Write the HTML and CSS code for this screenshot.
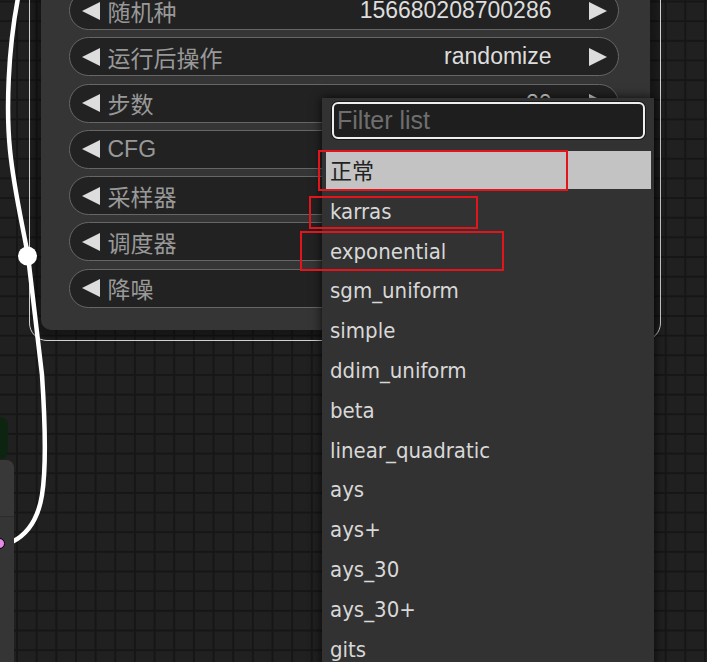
FILE: index.html
```html
<!doctype html>
<html lang="zh">
  <head>
    <meta charset="UTF-8" />
    <meta name="viewport" content="width=device-width, initial-scale=1.0" />
    <title>KSampler - scheduler</title>
    <link rel="stylesheet" href="styles.css">
  </head>
  <body>
    <div class="canvas">
      <!-- selected sampler node -->
      <div class="node node-sampler">
        <div class="widget">
          <svg class="arrow" viewBox="0 0 18 18"><polygon points="18,0 0,9 18,18" /></svg>
          <span class="label">随机种</span>
          <span class="value">156680208700286</span>
          <svg class="arrow" viewBox="0 0 18 18"><polygon points="0,0 18,9 0,18" /></svg>
        </div>
        <div class="widget">
          <svg class="arrow" viewBox="0 0 18 18"><polygon points="18,0 0,9 18,18" /></svg>
          <span class="label">运行后操作</span>
          <span class="value">randomize</span>
          <svg class="arrow" viewBox="0 0 18 18"><polygon points="0,0 18,9 0,18" /></svg>
        </div>
        <div class="widget">
          <svg class="arrow" viewBox="0 0 18 18"><polygon points="18,0 0,9 18,18" /></svg>
          <span class="label">步数</span>
          <span class="value">20</span>
          <svg class="arrow" viewBox="0 0 18 18"><polygon points="0,0 18,9 0,18" /></svg>
        </div>
        <div class="widget">
          <svg class="arrow" viewBox="0 0 18 18"><polygon points="18,0 0,9 18,18" /></svg>
          <span class="label">CFG</span>
          <span class="value">8.0</span>
          <svg class="arrow" viewBox="0 0 18 18"><polygon points="0,0 18,9 0,18" /></svg>
        </div>
        <div class="widget">
          <svg class="arrow" viewBox="0 0 18 18"><polygon points="18,0 0,9 18,18" /></svg>
          <span class="label">采样器</span>
          <span class="value">euler</span>
          <svg class="arrow" viewBox="0 0 18 18"><polygon points="0,0 18,9 0,18" /></svg>
        </div>
        <div class="widget">
          <svg class="arrow" viewBox="0 0 18 18"><polygon points="18,0 0,9 18,18" /></svg>
          <span class="label">调度器</span>
          <span class="value">正常</span>
          <svg class="arrow" viewBox="0 0 18 18"><polygon points="0,0 18,9 0,18" /></svg>
        </div>
        <div class="widget">
          <svg class="arrow" viewBox="0 0 18 18"><polygon points="18,0 0,9 18,18" /></svg>
          <span class="label">降噪</span>
          <span class="value">1.00</span>
          <svg class="arrow" viewBox="0 0 18 18"><polygon points="0,0 18,9 0,18" /></svg>
        </div>
      </div>

      <!-- link wire -->
      <svg class="wires" viewBox="0 0 707 662">
        <path d="M18,-2 C8,50 6,110 10,150 S22,222 28,256 L42,375 C45,420 46,470 42,495 C38,520 26,535 12,542" />
        <circle cx="27.5" cy="256" r="9.5" />
      </svg>

      <!-- node at the left edge -->
      <div class="group-tag"></div>
      <div class="node node-left">
        <div class="node-left-title"></div>
        <div class="slot"></div>
      </div>

      <!-- scheduler dropdown -->
      <div class="menu">
        <input class="filter" type="text" placeholder="Filter list" />
        <div class="entry selected">正常</div>
        <div class="entry">karras</div>
        <div class="entry">exponential</div>
        <div class="entry">sgm_uniform</div>
        <div class="entry">simple</div>
        <div class="entry">ddim_uniform</div>
        <div class="entry">beta</div>
        <div class="entry">linear_quadratic</div>
        <div class="entry">ays</div>
        <div class="entry">ays+</div>
        <div class="entry">ays_30</div>
        <div class="entry">ays_30+</div>
        <div class="entry">gits</div>
      </div>

      <!-- red annotation boxes -->
      <div class="mark mark-1"></div>
      <div class="mark mark-2"></div>
      <div class="mark mark-3"></div>
    </div>
  </body>
</html>
```

FILE: styles.css
```css
body {
  margin: 0;
  background: #202020;
}

.canvas {
  position: relative;
  width: 707px;
  height: 662px;
  overflow: hidden;
  background-color: #202020;
  background-image:
    linear-gradient(to right, #161616 2px, transparent 2px),
    linear-gradient(to bottom, #161616 2px, transparent 2px);
  background-size: 19.66px 19.66px;
  background-position: 16px 0, 0 0.5px;
  font-family: 'Liberation Sans', 'Noto Sans CJK SC', sans-serif;
}

.node {
  position: absolute;
  box-sizing: border-box;
  background: #353535;
}

.node-sampler {
  left: 41px;
  top: -40px;
  width: 609px;
  height: 370px;
  padding: 31px 31px 0 28px;
  border-radius: 10px;
  display: flex;
  flex-direction: column;
  gap: 7.3px;
  box-shadow: 0 0 6px 8px rgba(0, 0, 0, 0.3);
}

/* selection outline */
.node-sampler::before {
  content: '';
  position: absolute;
  top: -12px;
  left: -12px;
  right: -11px;
  bottom: -11px;
  border: 1.5px solid #d0d0d0;
  border-radius: 18px;
}

.widget {
  position: relative;
  height: 39px;
  box-sizing: border-box;
  border: 1.5px solid #666;
  border-radius: 20px;
  background: #222;
  display: flex;
  align-items: center;
  padding: 0 11.5px;
  font-size: 23px;
}

.arrow {
  width: 18px;
  height: 18px;
  flex: none;
  fill: #ddd;
}

.label {
  flex: 1;
  margin-left: 8px;
  color: #999;
}

.value {
  margin-right: 37px;
  color: #ddd;
}

.wires {
  position: absolute;
  left: 0;
  top: 0;
  width: 707px;
  height: 662px;
}

.wires path {
  fill: none;
  stroke: #fff;
  stroke-width: 4.5;
}

.wires circle {
  fill: #fff;
}

.group-tag {
  position: absolute;
  left: 0;
  top: 417px;
  width: 8px;
  height: 42px;
  background: #0d2410;
  border-radius: 0 8px 8px 0;
}

.node-left {
  left: 0;
  top: 460px;
  width: 14px;
  height: 210px;
  border-radius: 0 8px 0 0;
}

.node-left-title {
  height: 56px;
  border-bottom: 1px solid #2c2c2c;
  background: #383838;
  border-radius: 0 8px 0 0;
}

.slot {
  position: absolute;
  left: -6px;
  top: 78px;
  width: 9px;
  height: 9px;
  border-radius: 50%;
  background: #e58ae5;
  border: 1.5px solid #000;
}

.menu {
  position: absolute;
  left: 322px;
  top: 98px;
  width: 332px;
  height: 600px;
  box-sizing: border-box;
  padding: 4px 3px 0 4px;
  background: #323232;
  box-shadow: 0 0 10px rgba(0, 0, 0, 0.8);
  display: flex;
  flex-direction: column;
}

.filter {
  height: 37px;
  box-sizing: border-box;
  margin: 0 6px 12px 6px;
  padding: 0 0 0 3px;
  border: 2.5px solid #eee;
  border-radius: 6px;
  background: #1e1e1e;
  box-shadow: 0 0 0 1px #181818;
  color: #ddd;
  font-family: 'Liberation Sans', sans-serif;
  font-size: 25px;
  outline: none;
}

.filter::placeholder {
  color: #6e6e6e;
}

.entry {
  height: 38px;
  box-sizing: border-box;
  flex: none;
  margin-bottom: 1.8px;
  padding: 4px 0 0 4px;
  line-height: 34px;
  color: #d8d8d8;
  font-family: 'DejaVu Sans Condensed', 'DejaVu Sans', 'Noto Sans CJK SC', sans-serif;
  font-stretch: condensed;
  font-size: 22px;
}

.entry.selected {
  background: #c3c3c3;
  color: #222;
}

.mark {
  position: absolute;
  box-sizing: border-box;
  border: 2px solid #e4141c;
}

.mark-1 {
  left: 318px;
  top: 150px;
  width: 250px;
  height: 41px;
}

.mark-2 {
  left: 309px;
  top: 196px;
  width: 169px;
  height: 33px;
}

.mark-3 {
  left: 300px;
  top: 231px;
  width: 204px;
  height: 40px;
}
```
